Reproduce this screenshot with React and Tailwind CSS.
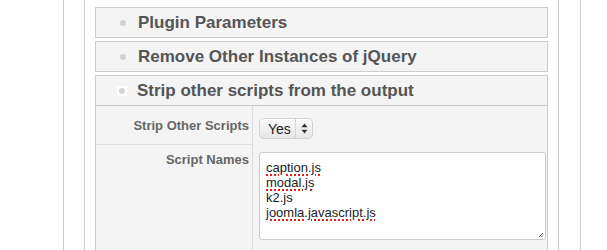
import React from 'react';

const Bullet = ({ active }) => (
  <span
    className={`flex h-[10px] w-[10px] items-center justify-center ${active ? 'bg-white' : ''}`}
  >
    <span className="h-[6px] w-[6px] rounded-full bg-[#d4d4d4]" />
  </span>
);

const PanelHeader = ({ title, active, last }) => (
  <div
    className={`flex h-[31px] items-center border border-[#cccccc] bg-[#f4f4f4] pl-[22px] ${
      active ? 'border-b' : ''
    }`}
  >
    <Bullet active={active} />
    <span className="ml-[10px] text-[17px] font-bold leading-none text-[#555555]">{title}</span>
  </div>
);

const Spell = ({ children }) => (
  <span className="underline decoration-[#e0201a] decoration-dotted decoration-[1.5px] underline-offset-[2px]">
    {children}
  </span>
);

export default function App() {
  return (
    <div
      className="h-[250px] w-[607px] overflow-hidden bg-white"
      style={{ fontFamily: '"Liberation Sans", Arial, Helvetica, sans-serif' }}
    >
      <div className="ml-[63px] h-full w-[518px] border-x border-[#cccccc] pl-[20px]">
        <div className="h-full w-[475px] border-x border-[#cccccc] px-[10px] pt-[7px]">
          <div className="flex flex-col gap-[3px]">
            <PanelHeader title="Plugin Parameters" />
            <PanelHeader title="Remove Other Instances of jQuery" />
            <div className="border-x border-t border-[#cccccc] bg-[#f4f4f4]">
              <div className="flex h-[30px] items-center border-b border-[#cccccc] pl-[21px]">
                <Bullet active />
                <span className="ml-[10px] text-[17px] font-bold leading-none text-[#555555]">
                  Strip other scripts from the output
                </span>
              </div>

              <div className="flex">
                <div className="w-[157px] border-r border-[#dddddd]">
                  <div className="flex h-[39px] justify-end border-b border-[#dddddd] pr-[3px] pt-[13px] text-[13px] font-bold leading-none text-[#666666]">
                    Strip Other Scripts
                  </div>
                  <div className="flex h-[120px] justify-end pr-[3px] pt-[8px] text-[13px] font-bold leading-none text-[#666666]">
                    Script Names
                  </div>
                </div>

                <div className="flex-1 pl-[6px]">
                  <div className="pt-[12px]">
                    <div className="flex h-[21px] w-[54px] items-center rounded-[5px] border border-[#d2d2d2] bg-gradient-to-b from-[#fbfbfb] to-[#e6e6e6] shadow-[inset_0_1px_0_#fff]">
                      <span className="w-[35px] pl-[8px] text-[14px] leading-none text-[#222222]">Yes</span>
                      <span className="flex h-full flex-1 items-center justify-center border-l border-[#d6d6d6]">
                        <svg width="7" height="11" viewBox="0 0 7 11">
                          <path d="M3.5 0.5 L6.5 4.2 L0.5 4.2 Z" fill="#333" />
                          <path d="M3.5 10.5 L6.5 6.8 L0.5 6.8 Z" fill="#333" />
                        </svg>
                      </span>
                    </div>
                  </div>
                  <div className="pt-[13px]">
                    <div className="relative h-[88px] w-[287px] rounded-[3px] border border-[#cccccc] bg-white pl-[6px] pt-[7px] text-[13px] leading-[15px] text-[#222222]">
                      <div><Spell>caption.js</Spell></div>
                      <div><Spell>modal.js</Spell></div>
                      <div>k2.js</div>
                      <div><Spell>joomla.javascript.js</Spell></div>
                      <svg className="absolute bottom-[1px] right-[1px]" width="6" height="6" viewBox="0 0 6 6">
                        <path d="M1 5 L5 1 M3.5 5 L5 3.5" stroke="#555" strokeWidth="1" />
                      </svg>
                    </div>
                  </div>
                </div>
              </div>
            </div>
          </div>
        </div>
      </div>
    </div>
  );
}
